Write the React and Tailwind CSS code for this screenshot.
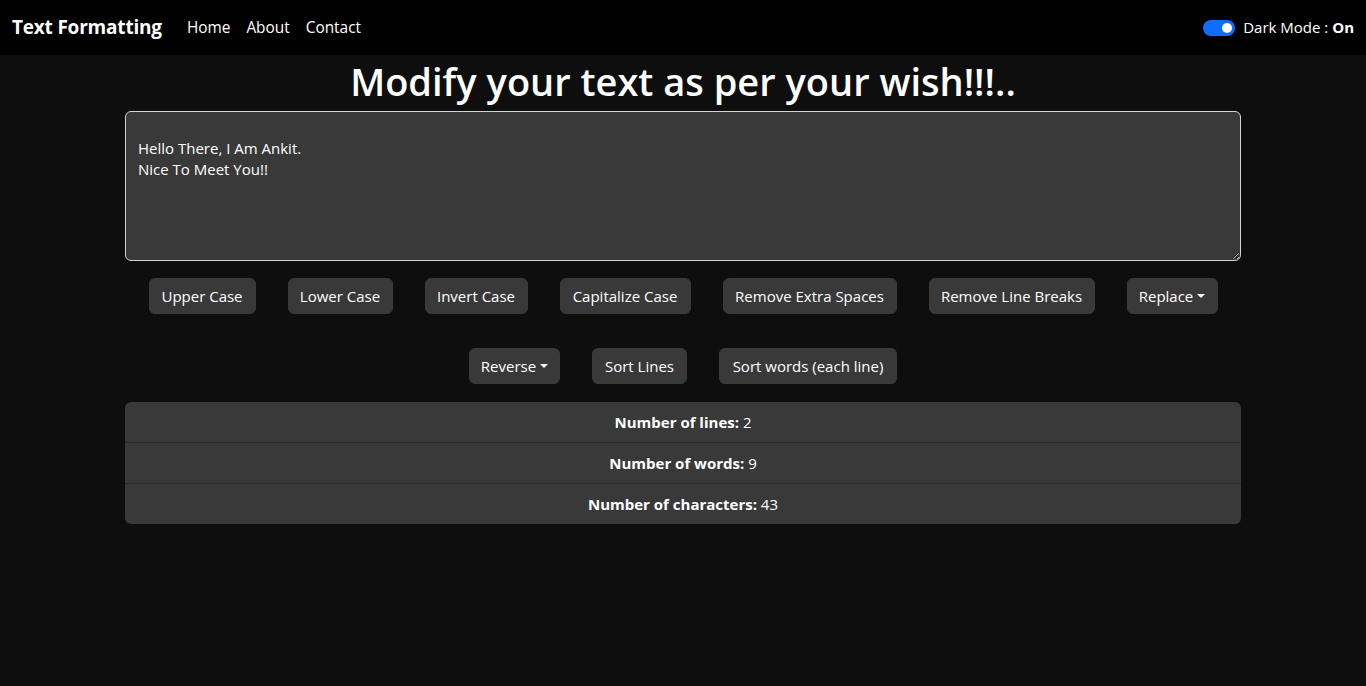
import React from "react";

const font = { fontFamily: '"Open Sans", "Noto Sans", sans-serif' };

function Btn({ children, caret, w }) {
  return (
    <button
      className={`mx-4 my-4 h-9 rounded-md border border-[#3a3a3a] bg-[#393939] px-0 text-[15px] whitespace-nowrap text-white flex items-center justify-center shrink-0 ${w}`}
    >
      {children}
      {caret && (
        <span className="ml-1 inline-block h-0 w-0 border-x-[4px] border-t-[4px] border-x-transparent border-t-white"></span>
      )}
    </button>
  );
}

export default function App() {
  return (
    <div className="min-h-[686px] bg-[#0e0e0e] text-white" style={font}>
      <nav className="flex h-[55px] items-center justify-between bg-black px-3">
        <div className="flex items-center">
          <span className="text-[19px] font-bold tracking-[-0.2px]">Text Formatting</span>
          <ul className="ml-[25px] flex gap-4 text-[15.4px]">
            <li>Home</li>
            <li>About</li>
            <li>Contact</li>
          </ul>
        </div>
        <div className="flex items-center gap-2 pr-0">
          <span className="relative inline-block h-4 w-8 rounded-full bg-[#0d6efd]">
            <span className="absolute right-[3px] top-[3px] h-[10px] w-[10px] rounded-full bg-white"></span>
          </span>
          <span className="text-[15px]">
            Dark Mode : <b>On</b>
          </span>
        </div>
      </nav>

      <div className="mx-auto w-[1116px]">
        <h1 className="mt-[2px] text-center text-[38px] font-semibold leading-[48px]">
          Modify your text as per your wish!!!..
        </h1>
        <textarea
          className="mt-[6px] block h-[150px] w-full resize-y rounded-md border border-[#cfd4da] bg-[#393939] px-3 pt-[26px] text-[15px] leading-[21px] text-white outline-none"
          defaultValue={"Hello There, I Am Ankit.\nNice To Meet You!!"}
        />
        <div className="mt-[1px] flex flex-wrap justify-center">
          <Btn w="w-[107px]">Upper Case</Btn>
          <Btn w="w-[105px]">Lower Case</Btn>
          <Btn w="w-[103px]">Invert Case</Btn>
          <Btn w="w-[131px]">Capitalize Case</Btn>
          <Btn w="w-[174px]">Remove Extra Spaces</Btn>
          <Btn w="w-[166px]">Remove Line Breaks</Btn>
          <Btn w="w-[91px]" caret>Replace</Btn>
        </div>
        <div className="mt-[2px] flex flex-wrap justify-center">
          <Btn w="w-[91px]" caret>Reverse</Btn>
          <Btn w="w-[95px]">Sort Lines</Btn>
          <Btn w="w-[178px]">Sort words (each line)</Btn>
        </div>
        <div className="mt-[2px] overflow-hidden rounded-md bg-[#393939] text-center text-[15px]">
          <div className="flex h-[41px] items-center justify-center border-b border-[#2c2c2c]">
            <b>Number of lines:</b>&nbsp;2
          </div>
          <div className="flex h-[41px] items-center justify-center border-b border-[#2c2c2c]">
            <b>Number of words:</b>&nbsp;9
          </div>
          <div className="flex h-[40px] items-center justify-center">
            <b>Number of characters:</b>&nbsp;43
          </div>
        </div>
      </div>
    </div>
  );
}
